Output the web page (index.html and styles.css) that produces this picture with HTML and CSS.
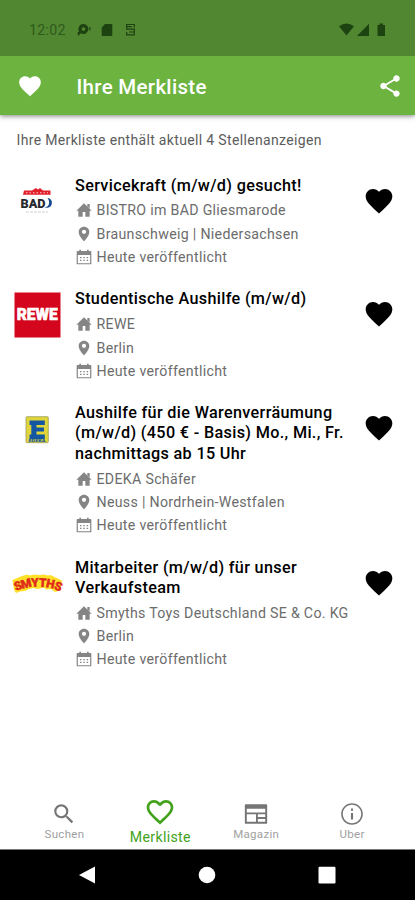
FILE: index.html
```html
<!DOCTYPE html>
<html lang="de">
<head>
<meta charset="utf-8">
<title>Ihre Merkliste</title>
<link rel="stylesheet" href="styles.css">
</head>
<body>
<svg width="0" height="0" class="defs">
  <symbol id="heart" viewBox="0 0 24 24"><path d="M12 21.35l-1.45-1.32C5.4 15.36 2 12.28 2 8.5 2 5.42 4.42 3 7.5 3c1.74 0 3.41.81 4.5 2.09C13.09 3.81 14.76 3 16.5 3 19.58 3 22 5.42 22 8.5c0 3.78-3.4 6.86-8.55 11.54L12 21.35z"/></symbol>
  <symbol id="home" viewBox="0 0 24 24"><path d="M10 22v-7h4v7h6.500v-9H23.500L12 2 .5 13h3v9z"/><path d="M17 3h3.500v7L17 6.500z"/></symbol>
  <symbol id="pin" viewBox="0 0 24 24"><path fill-rule="evenodd" d="M12 1C7.500 1 4 4.500 4 9c0 6 8 14 8 14s8-8 8-14c0-4.500-3.500-8-8-8zm0 11a3.200 3.200 0 1 1 0-6.400 3.200 3.200 0 0 1 0 6.400z"/></symbol>
  <symbol id="calendar" viewBox="0 0 24 24"><path fill-rule="evenodd" d="M2 3h3V1h2.500v2h9V1H19v2h3q1 0 1 1v18q0 1-1 1H2q-1 0-1-1V4q0-1 1-1zm.8 6v12.200h18.400V9z"/><path d="M6 12h2.200v2H6zm5 0h2.200v2H11zm5 0h2.200v2H16zM6 16h2.200v2H6zm5 0h2.200v2H11zm5 0h2.200v2H16z"/></symbol>
</svg>

<header>
  <div class="status">
    <span class="clock">12:02</span>
    <svg class="s-cam" viewBox="0 0 16 14"><path fill-rule="evenodd" d="M7.500 1a5 5 0 1 1-2.600 9.300L2 13 1.500 9.500 3 8.500A5 5 0 0 1 7.500 1zm0 3.300a1.800 1.800 0 1 0 0 3.600 1.800 1.800 0 0 0 0-3.600z"/><path d="M13.300 4h1.200v3.500h-1.200z"/></svg>
    <svg class="s-sd" viewBox="0 0 12 14"><path d="M4 1h6.500q.8 0 .8.800v10.400q0 .8-.8.800h-9q-.8 0-.8-.8V4.500z"/></svg>
    <svg class="s-s" viewBox="0 0 11 14"><path d="M9.300 4.500V1.500H1.700v4.700h7.600v5.600H1.700V9M1.700 3.700h5M4 9h5" fill="none" stroke="currentColor" stroke-width="1.200"/></svg>
    <svg class="s-right" viewBox="0 0 48 14"><path d="M0 3.200Q7.500-2 15 3.200L7.500 12.500zM18 13L30 .8V13zM38.500 2h2V.500h3.500V2h2v11h-7.500z"/></svg>
  </div>
  <div class="bar">
    <svg class="bar-heart"><use href="#heart"/></svg>
    <h1>Ihre Merkliste</h1>
    <svg class="share" viewBox="0 0 24 24"><path d="M18 16.080c-.76 0-1.440.3-1.960.77L8.910 12.700c.05-.23.09-.46.09-.7s-.04-.47-.09-.7l7.050-4.110c.54.5 1.250.81 2.040.81 1.660 0 3-1.340 3-3s-1.340-3-3-3-3 1.340-3 3c0 .24.040.47.090.7L8.040 9.810C7.500 9.310 6.790 9 6 9c-1.660 0-3 1.340-3 3s1.340 3 3 3c.79 0 1.500-.31 2.040-.81l7.120 4.160c-.05.21-.08.43-.08.650 0 1.610 1.310 2.920 2.920 2.920s2.920-1.310 2.920-2.920-1.310-2.920-2.920-2.920z"/></svg>
  </div>
</header>

<main>
  <p class="intro">Ihre Merkliste enthält aktuell 4 Stellenanzeigen</p>

  <article>
    <div class="logo">
      <svg viewBox="0 0 60 50"><path d="M24 14.500h8l4-2.500 2 1.500 2-1.500 3 2.500h7.500v4.300H23z" fill="#e2202c"/><path d="M26 16.800h22" stroke="#fff" stroke-width=".8" stroke-dasharray="1.500 2"/><text x="20.500" y="32" class="bad" textLength="25" lengthAdjust="spacingAndGlyphs">BAD</text><path d="M47.500 21.800a5 5 0 1 1-3.200 9.200c4.500 1 6.500-4.500 3.200-9.200z" fill="#174a8c"/><path d="M26 36h22" stroke="#ccd0d5" stroke-width="1" stroke-dasharray="3 1"/></svg>
    </div>
    <div class="job">
      <h2>Servicekraft (m/w/d) gesucht!</h2>
      <ul>
        <li><svg><use href="#home"/></svg><span>BISTRO im BAD Gliesmarode</span></li>
        <li><svg><use href="#pin"/></svg><span>Braunschweig | Niedersachsen</span></li>
        <li><svg><use href="#calendar"/></svg><span>Heute veröffentlicht</span></li>
      </ul>
    </div>
    <svg class="fav"><use href="#heart"/></svg>
  </article>

  <article>
    <div class="logo">
      <svg viewBox="0 0 60 50"><rect x="14.500" y="3.500" width="46" height="45" fill="#d3061d"/><text x="16.700" y="31" class="rewe" textLength="41" lengthAdjust="spacingAndGlyphs">REWE</text></svg>
    </div>
    <div class="job">
      <h2>Studentische Aushilfe (m/w/d)</h2>
      <ul>
        <li><svg><use href="#home"/></svg><span>REWE</span></li>
        <li><svg><use href="#pin"/></svg><span>Berlin</span></li>
        <li><svg><use href="#calendar"/></svg><span>Heute veröffentlicht</span></li>
      </ul>
    </div>
    <svg class="fav"><use href="#heart"/></svg>
  </article>

  <article>
    <div class="logo">
      <svg viewBox="0 0 60 50"><rect x="26" y="13.700" width="22.300" height="26" rx="1" fill="#e0d63c" stroke="#9c9a55" stroke-width=".8"/><path d="M29.500 17.400h15.300v4.500h-8.300v2.700h7.500v4h-7.500v2.800h8.300v4.500H29.500v-4.500h1.800V21.900h-1.800z" fill="#1457a0"/><text x="28.500" y="38.900" class="edeka" textLength="17" lengthAdjust="spacingAndGlyphs">EDEKA</text></svg>
    </div>
    <div class="job">
      <h2>Aushilfe für die Warenverräumung<br>(m/w/d) (450 € - Basis) Mo., Mi., Fr.<br>nachmittags ab 15 Uhr</h2>
      <ul>
        <li><svg><use href="#home"/></svg><span>EDEKA Schäfer</span></li>
        <li><svg><use href="#pin"/></svg><span>Neuss | Nordrhein-Westfalen</span></li>
        <li><svg><use href="#calendar"/></svg><span>Heute veröffentlicht</span></li>
      </ul>
    </div>
    <svg class="fav"><use href="#heart"/></svg>
  </article>

  <article>
    <div class="logo">
      <svg viewBox="0 0 60 50" class="smyths"><path d="M12.500 22l7-3 4-1.500 4-1 2 1 5-1 5 .5 5-.5 3 1 3-.5 11.500 5.500-2 10-5 1.500-4-3-5 .5-2-2-6 1.500-5-1-5 1.500-3 1.500-5 .5-4 1.500-2-3z" fill="#ffe12a"/><g><text transform="translate(16 33) rotate(-22)">S</text><text transform="translate(22 31) rotate(-14)">M</text><text transform="translate(31.500 29) rotate(-4)">Y</text><text transform="translate(38.700 28.700) rotate(3)">T</text><text transform="translate(45.500 29) rotate(12)">H</text><text transform="translate(53.500 31) rotate(20)">S</text></g></svg>
    </div>
    <div class="job">
      <h2>Mitarbeiter (m/w/d) für unser<br>Verkaufsteam</h2>
      <ul>
        <li><svg><use href="#home"/></svg><span>Smyths Toys Deutschland SE &amp; Co. KG</span></li>
        <li><svg><use href="#pin"/></svg><span>Berlin</span></li>
        <li><svg><use href="#calendar"/></svg><span>Heute veröffentlicht</span></li>
      </ul>
    </div>
    <svg class="fav"><use href="#heart"/></svg>
  </article>
</main>

<nav class="tabs">
  <a><svg viewBox="0 0 24 24"><path d="M15.500 14h-.79l-.28-.27A6.471 6.471 0 0 0 16 9.500 6.500 6.500 0 1 0 9.500 16c1.610 0 3.090-.59 4.230-1.570l.27.280v.79l5 4.990L20.490 19l-4.990-5zm-6 0C7.010 14 5 11.990 5 9.500S7.010 5 9.500 5 14 7.010 14 9.500 11.990 14 9.500 14z"/></svg><span>Suchen</span></a>
  <a class="active"><svg viewBox="0 0 24 24"><path d="M16.500 3c-1.740 0-3.410.81-4.500 2.090C10.910 3.810 9.240 3 7.500 3 4.420 3 2 5.420 2 8.500c0 3.780 3.400 6.860 8.550 11.540L12 21.350l1.450-1.320C18.600 15.360 22 12.280 22 8.500 22 5.420 19.580 3 16.500 3zm-4.400 15.550l-.1.100-.1-.1C7.140 14.240 4 11.390 4 8.500 4 6.500 5.500 5 7.500 5c1.540 0 3.040.99 3.570 2.360h1.870C13.460 5.990 14.960 5 16.500 5c2 0 3.500 1.500 3.500 3.500 0 2.890-3.140 5.740-7.900 10.050z"/></svg><span>Merkliste</span></a>
  <a><svg viewBox="0 0 24 24"><path fill-rule="evenodd" d="M2.500 3h19q.8 0 .8.800v16.400q0 .8-.8.800h-19q-.8 0-.8-.8V3.800q0-.8.800-.8zm1 4.200v3.300h17V7.200zm0 5v7H12v-7zm10.200 0v2.600h6.800v-2.600zm0 4.300v2.700h6.800v-2.700z"/></svg><span>Magazin</span></a>
  <a><svg viewBox="0 0 24 24"><path d="M11 7h2v2h-2zm0 4h2v6h-2zm1-9C6.480 2 2 6.480 2 12s4.480 10 10 10 10-4.480 10-10S17.520 2 12 2zm0 18.500c-4.700 0-8.500-3.800-8.500-8.500s3.800-8.500 8.500-8.500 8.500 3.800 8.500 8.500-3.800 8.500-8.500 8.500z"/></svg><span>Uber</span></a>
</nav>

<footer>
  <svg viewBox="0 0 18 18"><path d="M1 9L17 .5v17z"/></svg>
  <svg viewBox="0 0 18 18"><circle cx="9" cy="9" r="8.300"/></svg>
  <svg viewBox="0 0 18 18"><rect x=".5" y=".7" width="17" height="16.800" rx="1.200"/></svg>
</footer>
</body>
</html>
```
FILE: styles.css
```css
* { box-sizing: border-box; margin: 0; padding: 0; }

body {
  width: 415px;
  height: 900px;
  display: flex;
  flex-direction: column;
  overflow: hidden;
  background: #fff;
  font-family: Roboto, sans-serif;
  color: #000;
}

svg { display: block; flex: none; fill: currentColor; }
.defs { position: absolute; }

header { box-shadow: 0 1px 5px rgba(0, 0, 0, .5); }

.status {
  height: 56px;
  padding: 4px 28px 0 29px;
  display: flex;
  align-items: center;
  background: #528732;
  color: #1d4310;
}
.clock { width: 47px; font-size: 14.200px; letter-spacing: .3px; color: #2c5a1a; }
.s-cam { width: 16px; height: 14px; }
.s-sd { width: 12px; height: 14px; margin-left: 9px; }
.s-s { width: 11px; height: 14px; margin-left: 12px; }
.s-right { width: 48px; height: 14px; margin-left: auto; }

.bar {
  height: 59px;
  padding: 1px 12px 0 17px;
  display: flex;
  align-items: center;
  background: #6cb33f;
  color: #fff;
}
.bar-heart { width: 26px; height: 26px; }
.bar h1 { margin: 1px 0 0 33.500px; font-size: 20.500px; font-weight: 500; letter-spacing: .3px; }
.share { width: 26px; height: 26px; margin-left: auto; }

main { flex: 1; }

.intro {
  height: 60.500px;
  padding: 16px 0 0 16.500px;
  font-size: 14px;
  line-height: 19px;
  letter-spacing: .34px;
  color: #5c5c5c;
}

article {
  display: flex;
  align-items: flex-start;
  padding-bottom: 20.800px;
}
.logo { width: 75px; height: 50px; }
.logo svg { width: 60px; height: 50px; overflow: visible; }
.job { flex: 1; white-space: nowrap; }
h2 { font-size: 16.200px; line-height: 20.200px; font-weight: 500; letter-spacing: .34px; }
ul { list-style: none; margin-top: 3px; }
li {
  height: 23.300px;
  display: flex;
  align-items: center;
  gap: 4.500px;
  font-size: 14.200px;
  letter-spacing: .3px;
  color: #6c6c6c;
}
li svg { width: 16px; height: 16px; margin-left: 1px; color: #858585; }
.fav { width: 32px; height: 32px; margin: 9px 20px 0 0; }

.bad { font: 900 13px Roboto, sans-serif; fill: #26292e; }
.rewe { font: 900 16px Roboto, sans-serif; fill: #fff; stroke: #fff; stroke-width: .6px; }
.edeka { font: 900 3.500px Roboto, sans-serif; fill: #1457a0; }
.smyths text { font: 900 12px Roboto, sans-serif; fill: #e02a1c; stroke: #e02a1c; stroke-width: .4px; }

.tabs {
  height: 62px;
  padding: 0 15px 0 16.500px;
  display: flex;
  border-bottom: 1px solid #777;
}
.tabs a {
  flex: 1;
  padding-top: 13px;
  display: flex;
  flex-direction: column;
  align-items: center;
  font-size: 11.500px;
  line-height: 15px;
  letter-spacing: .3px;
  color: #a0a0a0;
}
.tabs svg { width: 26px; height: 26px; color: #757575; }
.tabs .active { padding-top: 8px; font-size: 14.200px; line-height: 19px; color: #43a21c; }
.tabs .active svg { width: 32px; height: 32px; color: #43a21c; }

footer {
  height: 50px;
  padding: 0 79px 0 78px;
  display: flex;
  align-items: center;
  justify-content: space-between;
  background: #000;
  color: #fff;
}
footer svg { width: 18px; height: 18px; }
```
